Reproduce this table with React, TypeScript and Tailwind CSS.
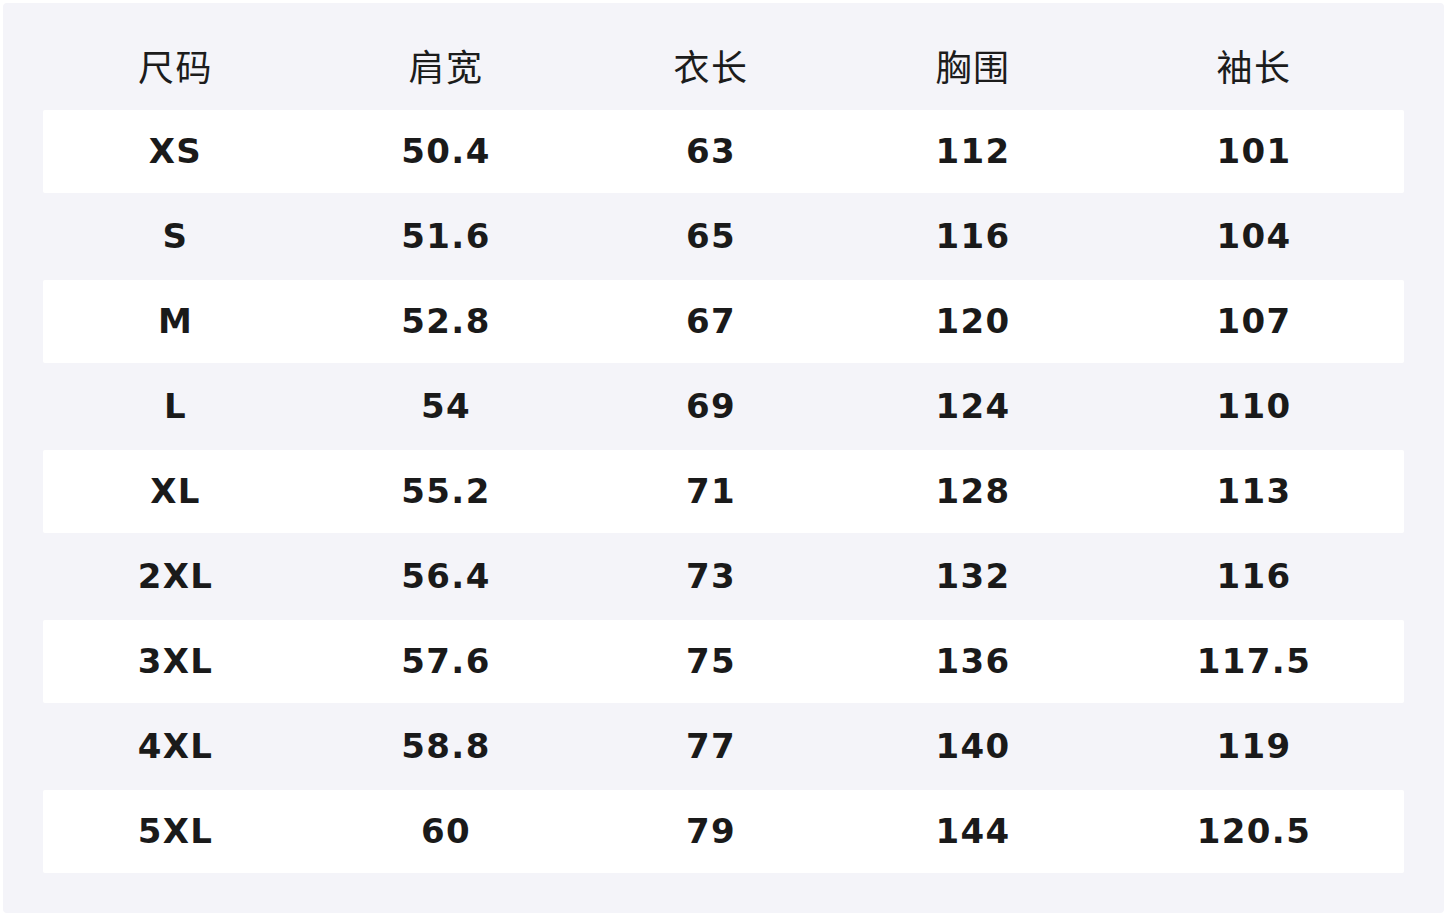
import React from 'react';

const headers = ['尺码', '肩宽', '衣长', '胸围', '袖长'];

const rows: string[][] = [
  ['XS', '50.4', '63', '112', '101'],
  ['S', '51.6', '65', '116', '104'],
  ['M', '52.8', '67', '120', '107'],
  ['L', '54', '69', '124', '110'],
  ['XL', '55.2', '71', '128', '113'],
  ['2XL', '56.4', '73', '132', '116'],
  ['3XL', '57.6', '75', '136', '117.5'],
  ['4XL', '58.8', '77', '140', '119'],
  ['5XL', '60', '79', '144', '120.5'],
];

const cols = 'grid grid-cols-[265px_276px_254px_270px_297px]';

export default function App() {
  return (
    <div className="w-[1448px] h-[918px] bg-white pt-[3px] pl-[3px] overflow-hidden">
      <div className="w-[1441px] h-[910px] bg-[#f4f4f9] rounded-[4px] px-[40px] pt-[24px] pb-[40px] flex flex-col gap-[2px]">
        {/* header */}
        <div
          className={`${cols} h-[81px] pb-[6px] items-center text-[36px] tracking-[0.04em] text-[#1c1c1c]`}
          style={{ fontFamily: '"Noto Sans CJK SC", "Noto Sans", sans-serif' }}
        >
          {headers.map((h, j) => (
            <div key={h} className={j === 4 ? 'text-center pr-[5px]' : 'text-center'}>
              {h}
            </div>
          ))}
        </div>

        {/* size rows */}
        {rows.map((r, i) => (
          <div
            key={r[0]}
            className={`${cols} h-[83px] items-center rounded-[2px] text-[34px] font-bold tracking-[0.04em] text-[#1a1a1a] ${
              i % 2 === 0 ? 'bg-white' : 'bg-transparent'
            }`}
            style={{ fontFamily: '"DejaVu Sans", sans-serif' }}
          >
            {r.map((v, j) => (
              <div key={j} className={j === 4 ? 'text-center pr-[5px]' : 'text-center'}>
                {v}
              </div>
            ))}
          </div>
        ))}
      </div>
    </div>
  );
}
